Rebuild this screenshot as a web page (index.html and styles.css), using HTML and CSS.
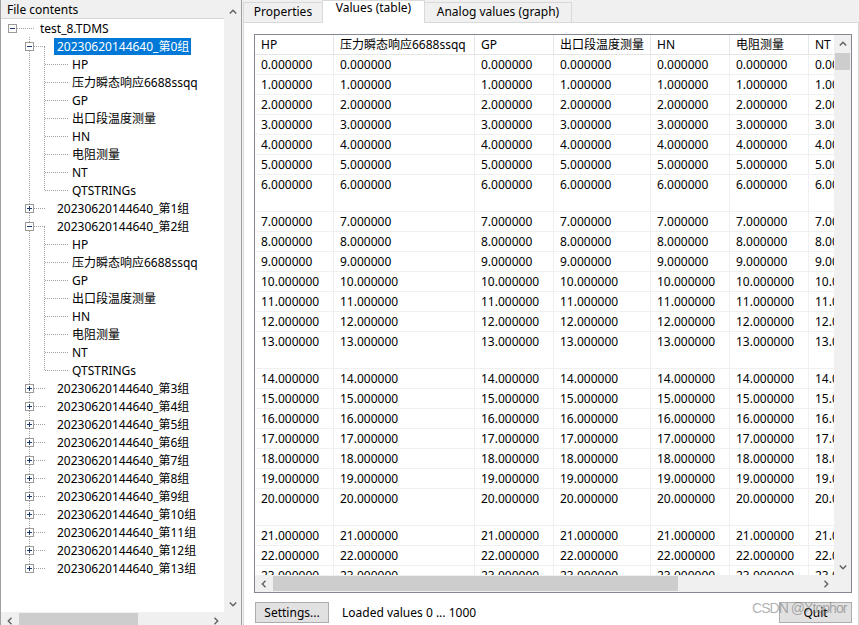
FILE: index.html
```html
<!DOCTYPE html>
<html>
<head>
<meta charset="utf-8">
<title>TDMS Viewer</title>
<link rel="stylesheet" href="styles.css">
</head>
<body>
<svg class="defs" width="0" height="0" aria-hidden="true">
  <defs>
    <g id="b-root">
      <path d="M16 9.5H33" stroke="#a0a0a0" stroke-dasharray="1 1" fill="none"/>
      <rect x="7.5" y="5.5" width="8" height="8" fill="#fff" stroke="#9a9a9a"/>
      <rect x="9" y="9" width="5" height="1" fill="#1c3a6e"/>
    </g>
    <g id="b-l1e">
      <path d="M28.5 0V5M28.5 14V18M33 9.5H44M43.5 10V18" stroke="#a0a0a0" stroke-dasharray="1 1" fill="none"/>
      <rect x="24.5" y="5.5" width="8" height="8" fill="#fff" stroke="#9a9a9a"/>
      <rect x="26" y="9" width="5" height="1" fill="#1c3a6e"/>
    </g>
    <g id="b-l1c">
      <path d="M28.5 0V5M28.5 14V18M33 9.5H44" stroke="#a0a0a0" stroke-dasharray="1 1" fill="none"/>
      <rect x="24.5" y="5.5" width="8" height="8" fill="#fff" stroke="#9a9a9a"/>
      <rect x="26" y="9" width="5" height="1" fill="#1c3a6e"/>
      <rect x="28" y="7" width="1" height="5" fill="#1c3a6e"/>
    </g>
    <g id="b-l1last">
      <path d="M28.5 0V5M33 9.5H44" stroke="#a0a0a0" stroke-dasharray="1 1" fill="none"/>
      <rect x="24.5" y="5.5" width="8" height="8" fill="#fff" stroke="#9a9a9a"/>
      <rect x="26" y="9" width="5" height="1" fill="#1c3a6e"/>
      <rect x="28" y="7" width="1" height="5" fill="#1c3a6e"/>
    </g>
    <g id="b-l2">
      <path d="M28.5 0V18M43.5 0V18M44 9.5H68" stroke="#a0a0a0" stroke-dasharray="1 1" fill="none"/>
    </g>
    <g id="b-l2last">
      <path d="M28.5 0V18M43.5 0V10M44 9.5H68" stroke="#a0a0a0" stroke-dasharray="1 1" fill="none"/>
    </g>
    <g id="ch-up"><polyline points="0.8,4.5 4,1.3 7.2,4.5" fill="none" stroke="#606060" stroke-width="1.4"/></g>
    <g id="ch-down"><polyline points="0.8,1.5 4,4.7 7.2,1.5" fill="none" stroke="#606060" stroke-width="1.4"/></g>
    <g id="ch-left"><polyline points="4.5,0.8 1.3,4 4.5,7.2" fill="none" stroke="#606060" stroke-width="1.4"/></g>
    <g id="ch-right"><polyline points="1.5,0.8 4.7,4 1.5,7.2" fill="none" stroke="#606060" stroke-width="1.4"/></g>
  </defs>
</svg>

<div class="app">
  <div class="left">
    <div class="tree-top">
      <div class="tree-area">
        <div class="tree-header">File contents</div>
        <div class="trow"><svg class="g0" width="36" height="18"><use href="#b-root"/></svg><span class="tl">test_8.TDMS</span></div>
        <div class="trow"><svg class="g1" width="53" height="18"><use href="#b-l1e"/></svg><span class="tl sel">20230620144640_第0组</span></div>
        <div class="trow"><svg class="g2" width="68" height="18"><use href="#b-l2"/></svg><span class="tl">HP</span></div>
        <div class="trow"><svg class="g2" width="68" height="18"><use href="#b-l2"/></svg><span class="tl">压力瞬态响应6688ssqq</span></div>
        <div class="trow"><svg class="g2" width="68" height="18"><use href="#b-l2"/></svg><span class="tl">GP</span></div>
        <div class="trow"><svg class="g2" width="68" height="18"><use href="#b-l2"/></svg><span class="tl">出口段温度测量</span></div>
        <div class="trow"><svg class="g2" width="68" height="18"><use href="#b-l2"/></svg><span class="tl">HN</span></div>
        <div class="trow"><svg class="g2" width="68" height="18"><use href="#b-l2"/></svg><span class="tl">电阻测量</span></div>
        <div class="trow"><svg class="g2" width="68" height="18"><use href="#b-l2"/></svg><span class="tl">NT</span></div>
        <div class="trow"><svg class="g2" width="68" height="18"><use href="#b-l2last"/></svg><span class="tl">QTSTRINGs</span></div>
        <div class="trow"><svg class="g1" width="53" height="18"><use href="#b-l1c"/></svg><span class="tl">20230620144640_第1组</span></div>
        <div class="trow"><svg class="g1" width="53" height="18"><use href="#b-l1e"/></svg><span class="tl">20230620144640_第2组</span></div>
        <div class="trow"><svg class="g2" width="68" height="18"><use href="#b-l2"/></svg><span class="tl">HP</span></div>
        <div class="trow"><svg class="g2" width="68" height="18"><use href="#b-l2"/></svg><span class="tl">压力瞬态响应6688ssqq</span></div>
        <div class="trow"><svg class="g2" width="68" height="18"><use href="#b-l2"/></svg><span class="tl">GP</span></div>
        <div class="trow"><svg class="g2" width="68" height="18"><use href="#b-l2"/></svg><span class="tl">出口段温度测量</span></div>
        <div class="trow"><svg class="g2" width="68" height="18"><use href="#b-l2"/></svg><span class="tl">HN</span></div>
        <div class="trow"><svg class="g2" width="68" height="18"><use href="#b-l2"/></svg><span class="tl">电阻测量</span></div>
        <div class="trow"><svg class="g2" width="68" height="18"><use href="#b-l2"/></svg><span class="tl">NT</span></div>
        <div class="trow"><svg class="g2" width="68" height="18"><use href="#b-l2last"/></svg><span class="tl">QTSTRINGs</span></div>
        <div class="trow"><svg class="g1" width="53" height="18"><use href="#b-l1c"/></svg><span class="tl">20230620144640_第3组</span></div>
        <div class="trow"><svg class="g1" width="53" height="18"><use href="#b-l1c"/></svg><span class="tl">20230620144640_第4组</span></div>
        <div class="trow"><svg class="g1" width="53" height="18"><use href="#b-l1c"/></svg><span class="tl">20230620144640_第5组</span></div>
        <div class="trow"><svg class="g1" width="53" height="18"><use href="#b-l1c"/></svg><span class="tl">20230620144640_第6组</span></div>
        <div class="trow"><svg class="g1" width="53" height="18"><use href="#b-l1c"/></svg><span class="tl">20230620144640_第7组</span></div>
        <div class="trow"><svg class="g1" width="53" height="18"><use href="#b-l1c"/></svg><span class="tl">20230620144640_第8组</span></div>
        <div class="trow"><svg class="g1" width="53" height="18"><use href="#b-l1c"/></svg><span class="tl">20230620144640_第9组</span></div>
        <div class="trow"><svg class="g1" width="53" height="18"><use href="#b-l1c"/></svg><span class="tl">20230620144640_第10组</span></div>
        <div class="trow"><svg class="g1" width="53" height="18"><use href="#b-l1c"/></svg><span class="tl">20230620144640_第11组</span></div>
        <div class="trow"><svg class="g1" width="53" height="18"><use href="#b-l1c"/></svg><span class="tl">20230620144640_第12组</span></div>
        <div class="trow"><svg class="g1" width="53" height="18"><use href="#b-l1last"/></svg><span class="tl">20230620144640_第13组</span></div>
      </div>
      <div class="tree-vscroll">
        <div class="arr"><svg width="8" height="6"><use href="#ch-up"/></svg></div>
        <div class="arr"><svg width="8" height="6"><use href="#ch-down"/></svg></div>
      </div>
    </div>
    <div class="tree-bottom">
      <div class="tree-hscroll">
        <div class="arr"><svg width="6" height="8"><use href="#ch-left"/></svg></div>
        <div class="hthumb tree-thumb"></div>
        <div class="spacer"></div>
        <div class="arr"><svg width="6" height="8"><use href="#ch-right"/></svg></div>
      </div>
      <div class="corner"></div>
    </div>
  </div>

  <div class="right">
    <div class="tabbar">
      <div class="tab tab-props">Properties</div>
      <div class="tab tab-sel">Values (table)</div>
      <div class="tab tab-graph">Analog values (graph)</div>
    </div>
    <div class="pane">
      <div class="grid">
        <div class="grid-top">
          <div class="viewport">
            <table class="data">
              <colgroup>
                <col class="c79"><col class="c141"><col class="c79"><col class="c97"><col class="c79"><col class="c79"><col class="c79">
              </colgroup>
              <thead>
                <tr><th>HP</th><th>压力瞬态响应6688ssqq</th><th>GP</th><th>出口段温度测量</th><th>HN</th><th>电阻测量</th><th>NT</th></tr>
              </thead>
              <tbody>
                <tr><td>0.000000</td><td>0.000000</td><td>0.000000</td><td>0.000000</td><td>0.000000</td><td>0.000000</td><td>0.000000</td></tr>
                <tr><td>1.000000</td><td>1.000000</td><td>1.000000</td><td>1.000000</td><td>1.000000</td><td>1.000000</td><td>1.000000</td></tr>
                <tr><td>2.000000</td><td>2.000000</td><td>2.000000</td><td>2.000000</td><td>2.000000</td><td>2.000000</td><td>2.000000</td></tr>
                <tr><td>3.000000</td><td>3.000000</td><td>3.000000</td><td>3.000000</td><td>3.000000</td><td>3.000000</td><td>3.000000</td></tr>
                <tr><td>4.000000</td><td>4.000000</td><td>4.000000</td><td>4.000000</td><td>4.000000</td><td>4.000000</td><td>4.000000</td></tr>
                <tr><td>5.000000</td><td>5.000000</td><td>5.000000</td><td>5.000000</td><td>5.000000</td><td>5.000000</td><td>5.000000</td></tr>
                <tr class="tall"><td>6.000000</td><td>6.000000</td><td>6.000000</td><td>6.000000</td><td>6.000000</td><td>6.000000</td><td>6.000000</td></tr>
                <tr><td>7.000000</td><td>7.000000</td><td>7.000000</td><td>7.000000</td><td>7.000000</td><td>7.000000</td><td>7.000000</td></tr>
                <tr><td>8.000000</td><td>8.000000</td><td>8.000000</td><td>8.000000</td><td>8.000000</td><td>8.000000</td><td>8.000000</td></tr>
                <tr><td>9.000000</td><td>9.000000</td><td>9.000000</td><td>9.000000</td><td>9.000000</td><td>9.000000</td><td>9.000000</td></tr>
                <tr><td>10.000000</td><td>10.000000</td><td>10.000000</td><td>10.000000</td><td>10.000000</td><td>10.000000</td><td>10.000000</td></tr>
                <tr><td>11.000000</td><td>11.000000</td><td>11.000000</td><td>11.000000</td><td>11.000000</td><td>11.000000</td><td>11.000000</td></tr>
                <tr><td>12.000000</td><td>12.000000</td><td>12.000000</td><td>12.000000</td><td>12.000000</td><td>12.000000</td><td>12.000000</td></tr>
                <tr class="tall"><td>13.000000</td><td>13.000000</td><td>13.000000</td><td>13.000000</td><td>13.000000</td><td>13.000000</td><td>13.000000</td></tr>
                <tr><td>14.000000</td><td>14.000000</td><td>14.000000</td><td>14.000000</td><td>14.000000</td><td>14.000000</td><td>14.000000</td></tr>
                <tr><td>15.000000</td><td>15.000000</td><td>15.000000</td><td>15.000000</td><td>15.000000</td><td>15.000000</td><td>15.000000</td></tr>
                <tr><td>16.000000</td><td>16.000000</td><td>16.000000</td><td>16.000000</td><td>16.000000</td><td>16.000000</td><td>16.000000</td></tr>
                <tr><td>17.000000</td><td>17.000000</td><td>17.000000</td><td>17.000000</td><td>17.000000</td><td>17.000000</td><td>17.000000</td></tr>
                <tr><td>18.000000</td><td>18.000000</td><td>18.000000</td><td>18.000000</td><td>18.000000</td><td>18.000000</td><td>18.000000</td></tr>
                <tr><td>19.000000</td><td>19.000000</td><td>19.000000</td><td>19.000000</td><td>19.000000</td><td>19.000000</td><td>19.000000</td></tr>
                <tr class="tall"><td>20.000000</td><td>20.000000</td><td>20.000000</td><td>20.000000</td><td>20.000000</td><td>20.000000</td><td>20.000000</td></tr>
                <tr><td>21.000000</td><td>21.000000</td><td>21.000000</td><td>21.000000</td><td>21.000000</td><td>21.000000</td><td>21.000000</td></tr>
                <tr><td>22.000000</td><td>22.000000</td><td>22.000000</td><td>22.000000</td><td>22.000000</td><td>22.000000</td><td>22.000000</td></tr>
                <tr><td>23.000000</td><td>23.000000</td><td>23.000000</td><td>23.000000</td><td>23.000000</td><td>23.000000</td><td>23.000000</td></tr>
              </tbody>
            </table>
          </div>
          <div class="vbar">
            <div class="arr"><svg width="8" height="6"><use href="#ch-up"/></svg></div>
            <div class="vthumb"></div>
            <div class="spacer"></div>
            <div class="arr"><svg width="8" height="6"><use href="#ch-down"/></svg></div>
          </div>
        </div>
        <div class="grid-bottom">
          <div class="hbar">
            <div class="arr"><svg width="6" height="8"><use href="#ch-left"/></svg></div>
            <div class="hthumb grid-thumb"></div>
            <div class="spacer"></div>
            <div class="arr"><svg width="6" height="8"><use href="#ch-right"/></svg></div>
          </div>
          <div class="corner"></div>
        </div>
      </div>
      <div class="actions">
        <button class="btn btn-settings">Settings...</button>
        <span class="status">Loaded values 0 ... 1000</span>
        <span class="spacer"></span>
        <button class="btn btn-quit">Quit</button>
      </div>
    </div>
  </div>
</div>
<div class="watermark">CSDN @Xtophor</div>
</body>
</html>
```

FILE: styles.css
```css
* { box-sizing: border-box; }
html, body { margin: 0; padding: 0; }
body {
  width: 859px;
  height: 625px;
  overflow: hidden;
  position: relative;
  background: #f0f0f0;
  font-family: "Noto Sans", "Noto Sans CJK SC", sans-serif;
  font-size: 12px;
  color: #000;
}
.defs { position: absolute; width: 0; height: 0; }
.app { display: flex; height: 625px; }

/* ---------- left tree ---------- */
.left {
  flex: none;
  width: 242px;
  height: 629px;
  display: flex;
  flex-direction: column;
  border-left: 1px solid #a0a0a0;
  border-right: 1px solid #a0a0a0;
}
.tree-top { display: flex; height: 612px; }
.tree-area {
  width: 223px;
  background: #fff;
  overflow: hidden;
}
.tree-header {
  height: 19px;
  background: #f0f0f0;
  border-bottom: 1px solid #d5d5d5;
  padding-left: 6px;
  line-height: 19px;
  white-space: nowrap;
}
.trow {
  display: flex;
  align-items: center;
  height: 18px;
  white-space: nowrap;
}
.trow svg { flex: none; display: block; }
.tl {
  padding: 0 2px 0 3px;
  line-height: 17px;
}
.tl.sel { background: #0078d7; color: #fff; }

.tree-vscroll {
  width: 17px;
  background: #f0f0f0;
  display: flex;
  flex-direction: column;
  justify-content: space-between;
  padding-top: 3px;
}
.arr {
  flex: none;
  width: 17px;
  height: 17px;
  display: flex;
  align-items: center;
  justify-content: center;
}
.arr svg { display: block; }
.spacer { flex: 1; }

.tree-bottom { display: flex; height: 17px; }
.tree-hscroll {
  width: 223px;
  background: #f0f0f0;
  display: flex;
  align-items: center;
}
.corner { width: 17px; height: 17px; background: #f0f0f0; }
.hthumb { height: 15px; background: #cdcdcd; }
.tree-thumb { width: 119px; margin-left: 1px; }

/* ---------- right side ---------- */
.right {
  flex: none;
  width: 616px;
  margin-left: 1px;
  display: flex;
  flex-direction: column;
}
.tabbar {
  display: flex;
  align-items: flex-end;
  height: 23px;
  border-bottom: 1px solid #d9d9d9;
}
.tab {
  flex: none;
  height: 20px;
  border: 1px solid #d9d9d9;
  border-bottom: 0;
  background: #f0f0f0;
  text-align: center;
  line-height: 13px;
  padding-top: 2px;
  white-space: nowrap;
}
.tab-props { width: 80px; }
.tab-sel {
  width: 103px;
  margin-left: -1px;
  height: 23px;
  margin-bottom: -1px;
  background: #fff;
  line-height: 12px;
  padding-top: 1px;
  position: relative;
}
.tab-graph { width: 148px; margin-left: -1px; }

.pane {
  flex: 1;
  background: #fff;
  border-left: 1px solid #d9d9d9;
  border-right: 1px solid #d9d9d9;
  padding: 11px 6px 0 10px;
}
.grid {
  width: 598px;
  height: 559px;
  border: 1px solid #828790;
  background: #fff;
  display: flex;
  flex-direction: column;
}
.grid-top { display: flex; height: 540px; }
.viewport { width: 579px; overflow: hidden; }
.vbar {
  width: 17px;
  background: #f0f0f0;
  display: flex;
  flex-direction: column;
  align-items: center;
}
.vthumb { width: 15px; height: 17px; margin-top: 1px; background: #cdcdcd; }
.grid-bottom { display: flex; height: 17px; }
.hbar {
  width: 579px;
  background: #f0f0f0;
  display: flex;
  align-items: center;
}
.grid-thumb { width: 405px; margin-left: 1px; }

table.data {
  table-layout: fixed;
  width: 633px;
  border-collapse: separate;
  border-spacing: 0;
}
col.c79 { width: 79px; }
col.c97 { width: 97px; }
col.c141 { width: 141px; }
table.data th,
table.data td {
  padding: 0 0 0 6px;
  text-align: left;
  font-weight: normal;
  vertical-align: top;
  white-space: nowrap;
  overflow: hidden;
  line-height: 19px;
  border-right: 1px solid #f0f0f0;
  border-bottom: 1px solid #f0f0f0;
}
table.data th {
  height: 20px;
  background: #fff;
  border-right-color: #e5e5e5;
  border-bottom-color: #e5e5e5;
}
table.data tr { height: 20px; }
table.data td { height: 20px; }
table.data tr.tall { height: 37px; }
table.data tr.tall td { height: 37px; }

.actions {
  display: flex;
  align-items: center;
  margin-top: 9px;
  height: 21px;
}
.btn {
  font-family: inherit;
  font-size: 12px;
  color: #000;
  height: 21px;
  padding: 0;
  background: #e1e1e1;
  border: 1px solid #adadad;
  line-height: 17px;
}
.btn-settings { width: 74px; margin-left: 1px; }
.status { margin-left: 13px; }
.btn-quit { width: 73px; }

.watermark {
  position: absolute;
  left: 752px;
  top: 600px;
  font-family: "Liberation Sans", sans-serif;
  font-size: 14px;
  letter-spacing: -0.95px;
  color: rgba(100, 100, 100, 0.5);
  white-space: nowrap;
  pointer-events: none;
}
```
